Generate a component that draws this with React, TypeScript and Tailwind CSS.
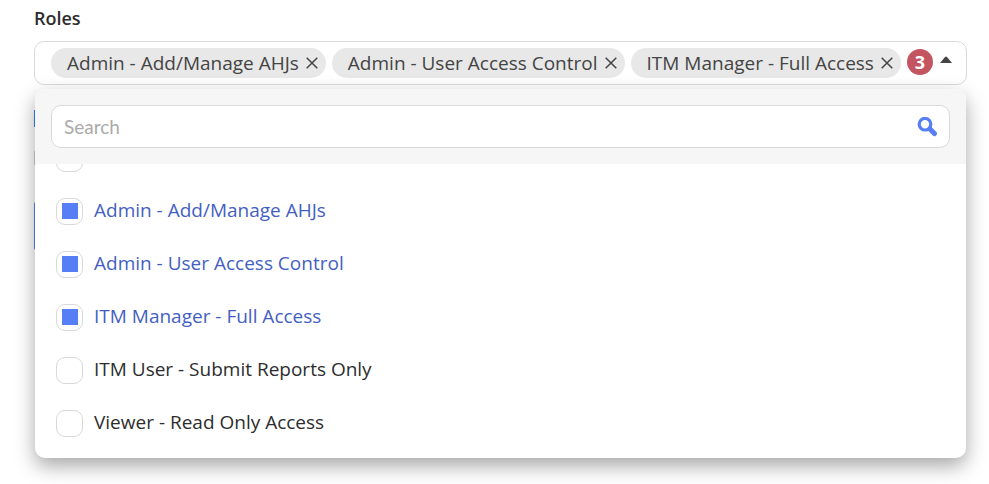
import React, { useState } from 'react';

const roles = [
  'Select',
  'Admin - Add/Manage AHJs',
  'Admin - User Access Control',
  'ITM Manager - Full Access',
  'ITM User - Submit Reports Only',
  'Viewer - Read Only Access',
];

const CloseIcon = () => (
  <svg width="12" height="12" viewBox="0 0 12 12" fill="none" stroke="#444" strokeWidth="1.5">
    <path d="M0.7 0.7L11.3 11.3M11.3 0.7L0.7 11.3" />
  </svg>
);

const SearchIcon = () => (
  <svg width="20" height="20" viewBox="0 0 20 20" fill="none" stroke="#567ff6">
    <circle cx="8" cy="7.2" r="5.8" strokeWidth="3.2" />
    <path d="M13 12L17.4 16.6" strokeWidth="5" strokeLinecap="round" />
  </svg>
);

const App = () => {
  const [selected, setSelected] = useState<string[]>(roles.slice(1, 4));
  const [query, setQuery] = useState('');

  const toggle = (role: string) => {
    setSelected((prev) =>
      prev.includes(role) ? prev.filter((r) => r !== role) : [...prev, role]
    );
  };

  const visible = roles.filter((r) => r.toLowerCase().includes(query.toLowerCase()));

  return (
    <div className="min-h-screen overflow-hidden bg-white pt-1 pr-[22px] pl-[34px] font-['Open_Sans',sans-serif] text-[19px] text-[#2d2d2d]">
      <h2 className="mb-[9px] text-[18px] leading-7 font-semibold">Roles</h2>

      <div className="relative">
        {/* Selected roles */}
        <div className="flex h-11 items-center rounded-[10px] border border-[#d9d9d9] bg-white px-4">
          <div className="flex gap-1.5">
            {selected.map((role) => (
              <span
                key={role}
                className="flex h-[30px] items-center gap-[7px] rounded-full bg-[#e8e8e8] pr-2 pl-4 whitespace-nowrap text-[#444]"
              >
                {role}
                <button type="button" aria-label={`Remove ${role}`} onClick={() => toggle(role)}>
                  <CloseIcon />
                </button>
              </span>
            ))}
          </div>
          <span className="mb-0.5 ml-1.5 flex size-[26px] shrink-0 items-center justify-center rounded-full bg-[#c25560] text-[18px] font-bold text-white">
            {selected.length}
          </span>
          <button type="button" aria-label="Toggle roles" className="mb-2 ml-[7px]">
            <svg width="12" height="7" viewBox="0 0 12 7" fill="#444">
              <path d="M0 7L5 1Q6 0 7 1L12 7Z" />
            </svg>
          </button>
        </div>

        {/* Dropdown */}
        <div className="absolute inset-x-px top-12 z-10 overflow-hidden rounded-[10px] bg-white pb-2 shadow-[0_8px_20px_rgba(0,0,0,0.35)]">
          <div className="relative z-10 bg-[#f6f6f6] p-4">
            <div className="flex h-[43px] items-center rounded-[10px] border border-[#d9d9d9] bg-white px-3">
              <input
                type="text"
                aria-label="Search"
                placeholder="Search"
                value={query}
                onChange={(e) => setQuery(e.target.value)}
                className="min-w-0 flex-1 pt-0.5 font-['Lato',sans-serif] text-[19px] outline-none placeholder:text-[#aaa]"
              />
              <button type="button" aria-label="Search roles">
                <SearchIcon />
              </button>
            </div>
          </div>
          <ul className="-mt-8">
            {visible.map((role) => (
              <li key={role}>
                <label
                  className={`flex h-[53px] items-center gap-[11px] px-[21px] ${
                    selected.includes(role)
                      ? 'text-[#445fc2]'
                      : role === 'Select'
                        ? 'text-[#bbb]'
                        : 'text-[#2d2d2d]'
                  }`}
                >
                  <input
                    type="checkbox"
                    checked={selected.includes(role)}
                    onChange={() => toggle(role)}
                    className="grid size-[27px] appearance-none place-items-center rounded-[9px] border border-[#d9d9d9] bg-white pb-px before:size-4 checked:before:bg-[#567ff6]"
                  />
                  <span className="pb-0.5">{role}</span>
                </label>
              </li>
            ))}
          </ul>
        </div>
      </div>

      {/* Rest of the form, under the open dropdown */}
      <div>
        <div className="mt-[25px] h-[17px] w-4 bg-[#2f80ff]" />
        <div className="mt-6 h-3.5 w-4 bg-[#d0d0d0]" />
        <div className="mt-[37px] h-12 w-40 rounded-xs bg-[#567ff6]" />
      </div>
    </div>
  );
};

export default App;
